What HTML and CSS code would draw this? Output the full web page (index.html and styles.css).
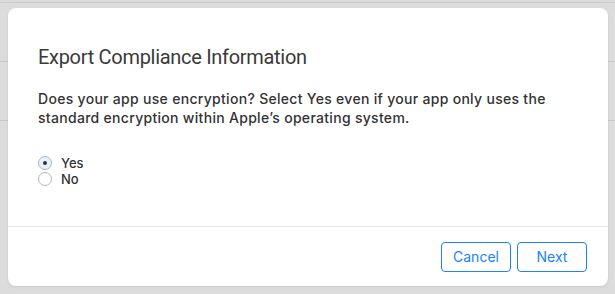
FILE: index.html
```html
<!DOCTYPE html>
<html>
<head>
<meta charset="utf-8">
<link rel="stylesheet" href="styles.css">
</head>
<body>
<div class="backdrop">
  <div class="bg-line l1"></div>
  <div class="bg-line l2"></div>
  <div class="bg-line l3"></div>
  <div class="dialog">
    <div class="content">
      <h1 class="title">Export Compliance Information</h1>
      <p class="question">Does your app use encryption? Select Yes even if your app only uses the standard encryption within Apple’s operating system.</p>
      <div class="options">
        <label class="option"><span class="radio checked"><span class="dot"></span></span><span>Yes</span></label>
        <label class="option"><span class="radio"></span><span>No</span></label>
      </div>
    </div>
    <div class="footer">
      <button class="btn">Cancel</button>
      <button class="btn">Next</button>
    </div>
  </div>
</div>
</body>
</html>
```
FILE: styles.css
```css
html, body {
  margin: 0;
  padding: 0;
  background: #dcdcdc;
  width: 615px;
  height: 294px;
  overflow: hidden;
}
.backdrop {
  position: relative;
  width: 615px;
  height: 294px;
  background: #dcdcdc;
  font-family: Inter, "Liberation Sans", sans-serif;
}
.bg-line {
  position: absolute;
  left: 0;
  right: 0;
  height: 1px;
  background: #c9c9c9;
}
.l1 { top: 2px; }
.l2 { top: 61px; }
.l3 { top: 120px; }
.dialog {
  position: absolute;
  left: 8px;
  top: 8px;
  width: 600px;
  height: 278px;
  background: #fff;
  border-radius: 8px;
  box-shadow: 0 1px 3px rgba(0,0,0,0.08);
  display: flex;
  flex-direction: column;
}
.content {
  flex: 1;
  padding: 35px 30px 0 30px;
  border-bottom: 1px solid #e5e5e5;
}
.title {
  margin: 0;
  font-family: Roboto, "Liberation Sans", sans-serif;
  font-size: 20px;
  font-weight: 400;
  line-height: 28px;
  color: #3a3a3a;
  letter-spacing: -0.3px;
}
.question {
  margin: 18px 0 0 0;
  font-size: 14px;
  line-height: 19px;
  color: #333;
  font-weight: 500;
  letter-spacing: 0.3px;
}
.options {
  margin-top: 28px;
  display: flex;
  flex-direction: column;
}
.option {
  display: flex;
  align-items: center;
  height: 16px;
  line-height: 16px;
  font-size: 13px;
  color: #333;
  font-weight: 500;
}
.radio {
  box-sizing: border-box;
  width: 14px;
  height: 14px;
  border: 1px solid #b3b3b3;
  border-radius: 50%;
  margin-right: 9px;
  display: flex;
  align-items: center;
  justify-content: center;
  background: #fff;
}
.radio.checked {
  background: #e8f2fe;
  border-color: #a9b3c0;
}
.dot {
  width: 4px;
  height: 4px;
  border-radius: 50%;
  background: #333;
}
.footer {
  height: 59px;
  display: flex;
  justify-content: flex-end;
  align-items: center;
  gap: 6px;
  padding: 0 21px 0 0;
}
.btn {
  box-sizing: border-box;
  width: 70px;
  height: 30px;
  border: 1px solid #1a82fb;
  border-radius: 4px;
  background: #fff;
  color: #1a82fb;
  font-family: Inter, "Liberation Sans", sans-serif;
  font-size: 14px;
  padding: 0;
}
```
